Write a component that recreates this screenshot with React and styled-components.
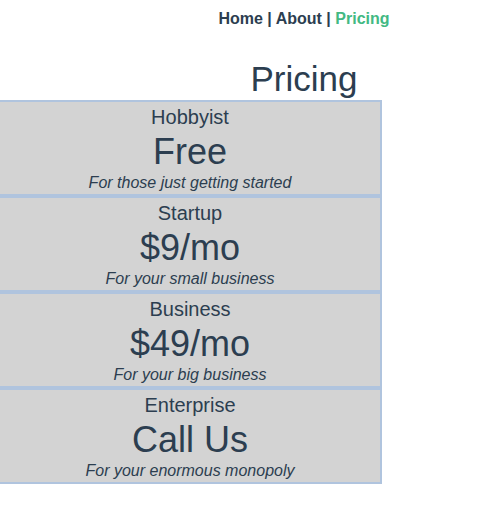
import React from 'react'
import styled, { createGlobalStyle } from 'styled-components'

const GlobalStyle = createGlobalStyle`
    body {
        margin: 0;
        background: #ffffff;
        font-family: "Liberation Sans", Arial, sans-serif;
        color: #2c3e50;
    }
`

const Page = styled.div`
    padding-top: 10px;
    overflow: hidden;
`

const Header = styled.div`
    padding-left: 118px;
    text-align: center;
`

const Nav = styled.nav`
    font-size: 16px;
    line-height: 18px;
    font-weight: 700;
`

const NavLink = styled.a`
    color: ${props => (props.active ? '#42b983' : '#2c3e50')};
    text-decoration: none;
`

const Title = styled.h1`
    margin: 32px 0 3px;
    font-size: 35px;
    line-height: 37px;
    font-weight: 400;
`

const PlanList = styled.div`
    margin-left: -2px;
    width: 384px;
    display: flex;
    flex-direction: column;
`

const Plan = styled.div`
    box-sizing: border-box;
    height: 96px;
    padding-top: 4px;
    border: 2px solid #b0c4de;
    background: #d3d3d3;
    display: flex;
    flex-direction: column;
    align-items: center;
`

const PlanName = styled.div`
    font-size: 20px;
    line-height: 23px;
`

const PlanPrice = styled.div`
    margin-top: 2px;
    font-size: 36px;
    line-height: 41px;
`

const PlanNote = styled.div`
    margin-top: 2px;
    font-size: 16px;
    line-height: 18px;
    font-style: italic;
`

const plans = [
    { name: 'Hobbyist', price: 'Free', note: 'For those just getting started' },
    { name: 'Startup', price: '$9/mo', note: 'For your small business' },
    { name: 'Business', price: '$49/mo', note: 'For your big business' },
    { name: 'Enterprise', price: 'Call Us', note: 'For your enormous monopoly' }
]

export default function App() {
    return (
        <Page>
            <GlobalStyle />
            <Header>
                <Nav>
                    <NavLink href="#">Home</NavLink> |{' '}
                    <NavLink href="#">About</NavLink> |{' '}
                    <NavLink href="#" active>
                        Pricing
                    </NavLink>
                </Nav>
                <Title>Pricing</Title>
            </Header>
            <PlanList>
                {plans.map(plan => (
                    <Plan key={plan.name}>
                        <PlanName>{plan.name}</PlanName>
                        <PlanPrice>{plan.price}</PlanPrice>
                        <PlanNote>{plan.note}</PlanNote>
                    </Plan>
                ))}
            </PlanList>
        </Page>
    )
}
